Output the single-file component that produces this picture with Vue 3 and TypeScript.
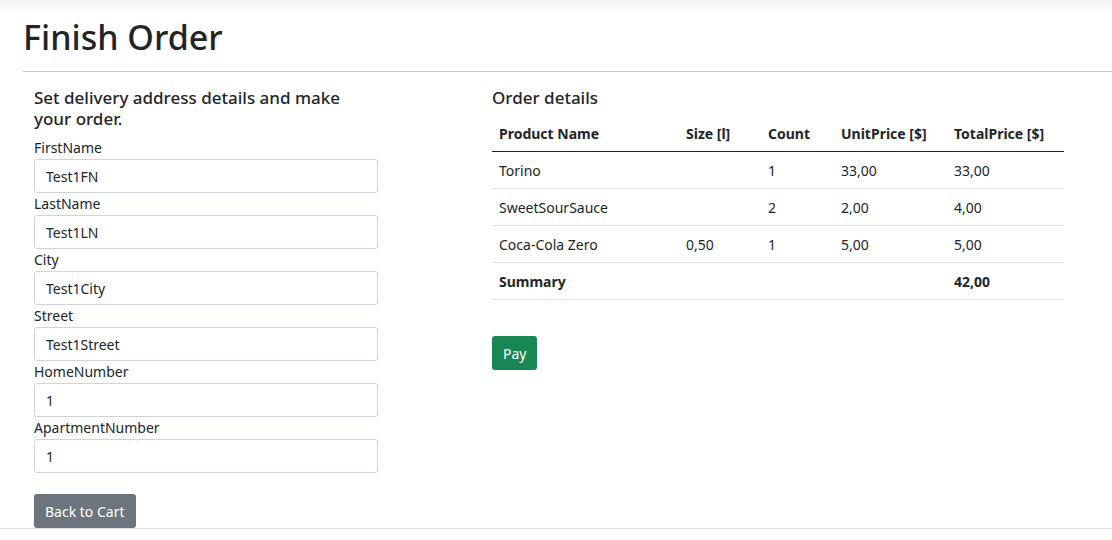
<script setup lang="ts">
import { ref } from 'vue'

interface Field { id: string; value: string }
interface Line { name: string; size: string; count: number; unit: string; total: string }

const fields = ref<Field[]>([
  { id: 'FirstName', value: 'Test1FN' },
  { id: 'LastName', value: 'Test1LN' },
  { id: 'City', value: 'Test1City' },
  { id: 'Street', value: 'Test1Street' },
  { id: 'HomeNumber', value: '1' },
  { id: 'ApartmentNumber', value: '1' },
])

const lines: Line[] = [
  { name: 'Torino', size: '', count: 1, unit: '33,00', total: '33,00' },
  { name: 'SweetSourSauce', size: '', count: 2, unit: '2,00', total: '4,00' },
  { name: 'Coca-Cola Zero', size: '0,50', count: 1, unit: '5,00', total: '5,00' },
]
</script>

<template>
  <div class="page">
    <main>
      <h1>Finish Order</h1>
      <hr />
      <div class="columns">
        <form class="address" @submit.prevent>
          <h2>Set delivery address details and make your order.</h2>
          <div v-for="f in fields" :key="f.id" class="field">
            <label :for="f.id">{{ f.id }}</label>
            <input :id="f.id" v-model="f.value" type="text" />
          </div>
          <button type="button" class="btn back">Back to Cart</button>
        </form>
        <section class="order">
          <h2>Order details</h2>
          <table>
            <colgroup>
              <col class="c-name" /><col class="c-size" /><col class="c-count" /><col class="c-unit" /><col />
            </colgroup>
            <thead>
              <tr>
                <th>Product Name</th><th>Size [l]</th><th>Count</th><th>UnitPrice [$]</th><th>TotalPrice [$]</th>
              </tr>
            </thead>
            <tbody>
              <tr v-for="l in lines" :key="l.name">
                <td>{{ l.name }}</td><td>{{ l.size }}</td><td>{{ l.count }}</td><td>{{ l.unit }}</td><td>{{ l.total }}</td>
              </tr>
              <tr class="summary">
                <td>Summary</td><td></td><td></td><td></td><td>42,00</td>
              </tr>
            </tbody>
          </table>
          <button type="button" class="btn pay">Pay</button>
        </section>
      </div>
    </main>
    <footer></footer>
  </div>
</template>

<style>
body { margin: 0; background: #fff; }
</style>

<style scoped>
* { box-sizing: border-box; }
.page {
  color: #212529;
  font: 14px/21px "Segoe UI", "Noto Sans", "Open Sans", sans-serif;
  background: linear-gradient(#f5f5f5, #fff 12px);
}
main { padding: 16px 0 0 23px; }
h1 { margin: 0 0 12px; font-size: 34px; line-height: 43px; font-weight: 500; }
hr { margin: 0; border: 0; border-top: 1px solid #c8c9ca; }
.columns { display: flex; padding: 15px 48px 0 11px; }
.address { flex: 0 0 344px; margin-right: 114px; }
.order { flex: 1; min-width: 0; }
h2 { margin: 0 0 8px; font-size: 17px; line-height: 21px; font-weight: 500; }
.field { height: 56px; }
.field label { display: block; margin-bottom: 1px; }
input {
  display: block;
  width: 100%;
  height: 34px;
  padding: 6px 11px;
  border: 1px solid #ced4da;
  border-radius: 3px;
  background: #fff;
  color: #212529;
  font: inherit;
}
.btn {
  display: block;
  height: 34px;
  padding: 0 11px;
  border: 0;
  border-radius: 3px;
  color: #fff;
  font: inherit;
}
.back { margin-top: 21px; background: #6c757d; }
.pay { margin-top: 36px; background: #198754; }
table { width: 100%; border-collapse: separate; border-spacing: 0; table-layout: fixed; }
.c-name { width: 187px; }
.c-size { width: 82px; }
.c-count { width: 73px; }
.c-unit { width: 113px; }
th, td { padding: 7px; border-bottom: 1px solid #dee2e6; text-align: left; white-space: nowrap; }
th { border-bottom-color: #212529; font-weight: 700; }
td { height: 37px; padding-top: 8px; }
.summary { font-weight: 700; }
footer { border-top: 1px solid #dee2e6; }
</style>
